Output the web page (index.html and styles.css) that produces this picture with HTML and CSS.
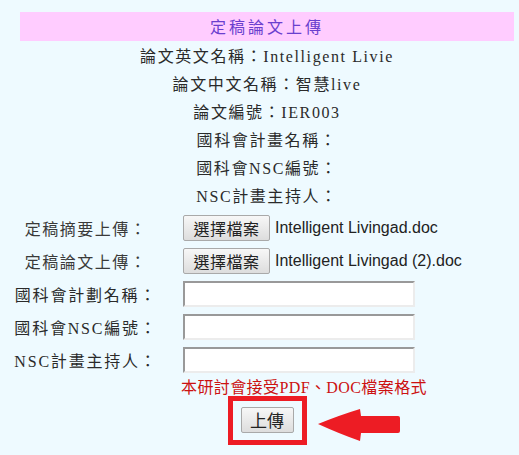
FILE: index.html
```html
<!DOCTYPE html>
<html lang="zh-Hant">
<head>
<meta charset="utf-8">
<title>定稿論文上傳</title>
<link rel="stylesheet" href="styles.css">
</head>
<body>
<div class="page">
  <div class="header">定稿論文上傳</div>
  <div class="info">
    <div class="line">論文英文名稱：Intelligent Livie</div>
    <div class="line">論文中文名稱：智慧live</div>
    <div class="line">論文編號：IER003</div>
    <div class="line">國科會計畫名稱：</div>
    <div class="line">國科會NSC編號：</div>
    <div class="line">NSC計畫主持人：</div>
  </div>
  <div class="form">
    <div class="label sans">定稿摘要上傳：</div>
    <div class="field"><button class="choose">選擇檔案</button><span class="fname">Intelligent Livingad.doc</span></div>
    <div class="label sans">定稿論文上傳：</div>
    <div class="field"><button class="choose">選擇檔案</button><span class="fname">Intelligent Livingad (2).doc</span></div>
    <div class="label">國科會計劃名稱：</div>
    <div class="field"><input class="text" type="text"></div>
    <div class="label">國科會NSC編號：</div>
    <div class="field"><input class="text" type="text"></div>
    <div class="label">NSC計畫主持人：</div>
    <div class="field"><input class="text" type="text"></div>
  </div>
  <div class="note">本研討會接受PDF、DOC檔案格式</div>
  <div class="submit-row"><button class="submit">上傳</button></div>
  <div class="mark-box"></div>
  <svg class="mark-arrow" width="90" height="40" viewBox="0 0 90 40">
    <path d="M2 18 Q24 9 44 3 L45 10 L82 10 Q84 10 84 12 L84 25 Q84 27 82 27 L45 27 L44 35 Q24 28 2 18 Z" fill="#ed1c24"/>
  </svg>
</div>
</body>
</html>
```
FILE: styles.css
```css
html, body {
  margin: 0;
  padding: 0;
  background: #eefaff;
}
.page {
  position: relative;
  box-sizing: border-box;
  width: 519px;
  height: 455px;
  padding-top: 12px;
  font-family: "Liberation Serif", "Noto Sans CJK TC", serif;
  font-size: 16px;
  color: #2a2a2a;
}
.header {
  margin: 0 5px 0 20px;
  height: 29px;
  line-height: 29px;
  background: #ffccff;
  color: #6a3fce;
  text-align: center;
  letter-spacing: 3px;
  font-family: "Noto Sans CJK TC", sans-serif;
}
.info {
  margin: 2px 5px 0 20px;
  text-align: center;
  letter-spacing: 1.6px;
}
.line {
  height: 28px;
  line-height: 28px;
}
.form {
  display: grid;
  grid-template-columns: 172px 232px;
  grid-auto-rows: 33px;
  column-gap: 11px;
  align-items: center;
}
.label {
  text-align: center;
  white-space: nowrap;
  letter-spacing: 1.8px;
}
.label.sans {
  font-family: "Noto Sans CJK TC", sans-serif;
  color: #3a3a3a;
  letter-spacing: 1.5px;
}
.field {
  display: flex;
  align-items: center;
  white-space: nowrap;
}
.choose {
  flex-shrink: 0;
  width: 87px;
  height: 26px;
  padding: 0;
  margin: 0;
  border: 1px solid #a9a9a9;
  border-radius: 2px;
  background: linear-gradient(#f7f7f7, #dddddd);
  font-family: "Noto Sans CJK TC", sans-serif;
  font-size: 16px;
  letter-spacing: 0.5px;
  line-height: 22px;
  color: #222;
}
.fname {
  margin-left: 5px;
  font-family: "Liberation Sans", sans-serif;
  font-size: 16px;
  color: #222;
}
.text {
  flex-shrink: 0;
  box-sizing: border-box;
  width: 232px;
  height: 26px;
  margin: 0;
  padding: 0;
  background: #fff;
  border-top: 2px solid #999;
  border-left: 2px solid #999;
  border-right: 2px solid #ececec;
  border-bottom: 2px solid #ececec;
}
.note {
  padding-left: 181px;
  height: 24px;
  line-height: 24px;
  color: #cc1111;
  letter-spacing: 0.4px;
  white-space: nowrap;
}
.submit-row {
  display: flex;
  justify-content: center;
  margin: 7px 5px 0 20px;
}
.submit {
  width: 53px;
  height: 26px;
  padding: 0;
  margin: 0;
  border: 1px solid #a9a9a9;
  border-radius: 2px;
  background: linear-gradient(#f7f7f7, #dddddd);
  font-family: "Noto Sans CJK TC", sans-serif;
  font-size: 17px;
  line-height: 22px;
  color: #222;
}
.mark-box {
  position: absolute;
  left: 228px;
  top: 396px;
  width: 79px;
  height: 49px;
  box-sizing: border-box;
  border: 5px solid #ed1c24;
}
.mark-arrow {
  position: absolute;
  left: 316px;
  top: 406px;
}
```
